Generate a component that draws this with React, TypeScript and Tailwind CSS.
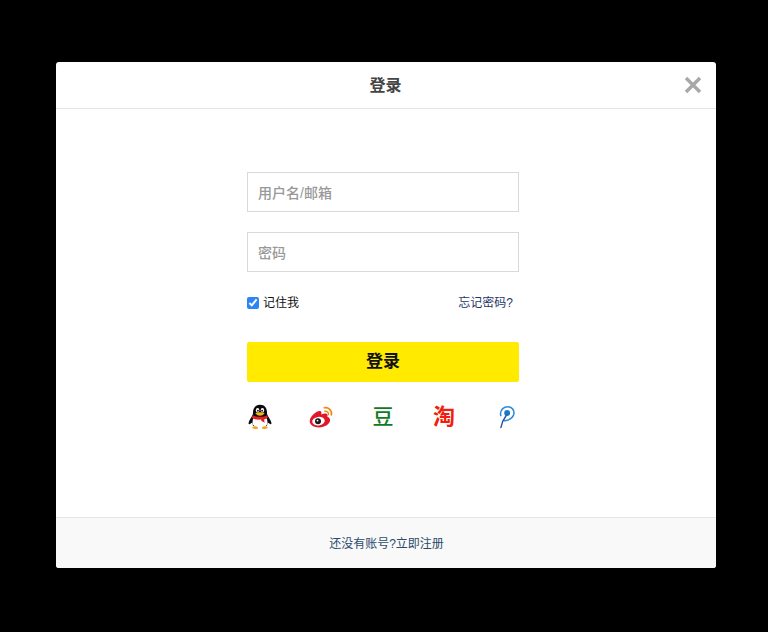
const cjk = "font-['Liberation_Sans','Noto_Sans_CJK_SC',sans-serif]";

function QQ() {
  return (
    <svg width="24" height="26" viewBox="0 0 24 26" className="shrink-0">
      <path d="M12 .8C7.200.8 5 4.300 5 8.500c0 1.500-.3 2.500-1 3.600-1.300 2.200-2.700 4.300-3.300 6.300-.4 1.200 0 2 .8 1.800l2.800-1.700.8 3.500h13.800l.8-3.500 2.800 1.700c.8.2 1.200-.6.800-1.800-.6-2-2-4.100-3.300-6.300-.7-1.100-1-2.100-1-3.600C19 4.300 16.800.8 12 .8z" fill="#0b0b0f" />
      <path d="M5.800 13c2 2.800 10.400 2.800 12.400 0 1 2.200 1.600 4.500 1.100 6.800-.5 2.300-3.500 3.700-7.300 3.700s-6.800-1.400-7.300-3.700c-.5-2.300.1-4.600 1.100-6.800z" fill="#fff" />
      <path d="M4.900 11.300c3.400 2 10.800 2 14.200 0l.8 2.200c-1 1-2.400 1.600-3.800 1.900l.5 3.400-3.100-1.700-.5-1.500c-1.800.2-4.200.1-6-.3-1.300-.3-2.500-1-3.300-2z" fill="#e0241b" />
      <ellipse cx="9.600" cy="6.200" rx="1.700" ry="2.200" fill="#fff" />
      <ellipse cx="14.400" cy="6.200" rx="1.700" ry="2.200" fill="#fff" />
      <circle cx="9.900" cy="6.700" r=".9" fill="#000" />
      <circle cx="14.100" cy="6.700" r=".9" fill="#000" />
      <path d="M7.400 9.300c1.700-1.300 7.500-1.300 9.200 0-1 1.700-3.200 2.500-4.600 2.500s-3.600-.8-4.600-2.500z" fill="#f2b619" />
      <path d="M4.200 23.200c1.500-1.300 4.500-1.100 5.800.4.300.9-.7 1.400-2.700 1.400-1.800 0-3.600-.6-3.100-1.800zM19.800 23.200c-1.500-1.300-4.500-1.100-5.800.4-.3.900.7 1.400 2.700 1.400 1.800 0 3.600-.6 3.100-1.800z" fill="#f2a516" />
    </svg>
  );
}

function Weibo() {
  return (
    <svg width="25" height="22" viewBox="0 0 24 22" className="shrink-0">
      <path d="M9.500 21.500C4.500 21.500.2 19 .2 15.300c0-2.400 1.600-4.900 4.100-7.200 2.900-2.600 5.800-3.700 7.200-2.500.6.600.6 1.700.2 2.800 2.900-1.200 5.300-1.200 6.100.1.400.6.400 1.500 0 2.300 1.800.6 2.800 1.700 2.800 3.200 0 3.700-5.200 7.500-11.100 7.500z" fill="#e2162a" />
      <ellipse cx="9" cy="15.200" rx="6.300" ry="4.300" fill="#fff" transform="rotate(-8 9 15.200)" />
      <circle cx="8.500" cy="15.300" r="3" fill="#1a1a1a" />
      <circle cx="8" cy="14.600" r=".9" fill="#fff" />
      <path d="M14.800 1.800c4-1 8 2.600 7.100 7.100" fill="none" stroke="#f08a14" strokeWidth="1.700" strokeLinecap="round" />
      <path d="M15.400 5.200c2.200-.4 3.900 1.400 3.500 3.400" fill="none" stroke="#f08a14" strokeWidth="1.500" strokeLinecap="round" />
    </svg>
  );
}

function Alipay() {
  return (
    <svg width="18" height="24" viewBox="0 0 18 24" className="shrink-0">
      <path d="M6.600 15.800C10 15.200 15.500 13 16 8.200 16.200 4.500 13.500 1.800 9.600 1.800 6 1.800 2.500 4.500 2.500 8.500c0 .8.100 1.500.3 2.100" fill="none" stroke="#2b8ad8" strokeWidth="1.500" strokeLinecap="round" />
      <circle cx="9.200" cy="7.900" r="3" fill="#2077c8" />
      <path d="M8.200 10.500C6 13.500 3.700 17.500 2.900 22.500" fill="none" stroke="#1a56a8" strokeWidth="1.400" strokeLinecap="round" />
    </svg>
  );
}

export default function App() {
  return (
    <div className={`h-[632px] w-[768px] overflow-hidden bg-black pl-[56px] pt-[62px] ${cjk}`}>
      <div className="flex h-[506px] w-[660px] flex-col overflow-hidden rounded-[3px] bg-white">
        <header className="relative flex h-[47px] shrink-0 items-center justify-center border-b border-[#e5e5e5] pr-[1px] pt-[1px]">
          <h1 className="text-[16px] font-bold text-[#444]">登录</h1>
          <svg width="20" height="20" viewBox="0 0 20 20" className="absolute right-[13px] top-[13px]">
            <path d="M3 3l14 14M17 3L3 17" stroke="#a8a8a8" strokeWidth="3.400" />
          </svg>
        </header>

        <main className="ml-[191px] flex w-[272px] flex-1 flex-col pt-[63px]">
          <input
            readOnly
            placeholder="用户名/邮箱"
            className="h-10 w-full border border-[#d9d9d9] pl-[10px] pr-[9px] pt-[2px] text-[14px] font-medium text-[#333] outline-none placeholder:text-[#999]"
          />
          <input
            readOnly
            placeholder="密码"
            className="mt-5 h-10 w-full border border-[#d9d9d9] pl-[10px] pr-[9px] pt-[2px] text-[14px] font-medium text-[#333] outline-none placeholder:text-[#999]"
          />
          <div className="mt-[22px] flex h-[17px] items-center justify-between pr-[6px] text-[12px]">
            <label className="flex items-center gap-[4px] text-[#111]">
              <input type="checkbox" readOnly checked className="m-0 h-3 w-3 accent-[#2b85f5]" />
              <span>记住我</span>
            </label>
            <a className="text-[#1f3566]">忘记密码?</a>
          </div>
          <button className="mt-[31px] h-10 w-full rounded-[2px] bg-[#ffea00] text-[17px] font-bold text-[#111]">登录</button>
          <div className="mt-[22px] flex h-[26px] items-center pl-[1px]">
            <QQ />
            <div className="ml-[37px]"><Weibo /></div>
            <span className="ml-[37px] w-[24px] text-center text-[21px] font-medium leading-[24px] text-[#0f7a1e]">豆</span>
            <span className="ml-[37px] w-[24px] text-center text-[22px] font-bold leading-[24px] text-[#f0200c]">淘</span>
            <div className="ml-[42px]"><Alipay /></div>
          </div>
        </main>

        <footer className="flex h-[51px] shrink-0 items-center justify-center border-t border-[#e5e5e5] bg-[#f9f9f9] pl-[1px] pt-[2px] text-[12px] text-[#2b4a6b]">
          还没有账号?立即注册
        </footer>
      </div>
    </div>
  );
}
